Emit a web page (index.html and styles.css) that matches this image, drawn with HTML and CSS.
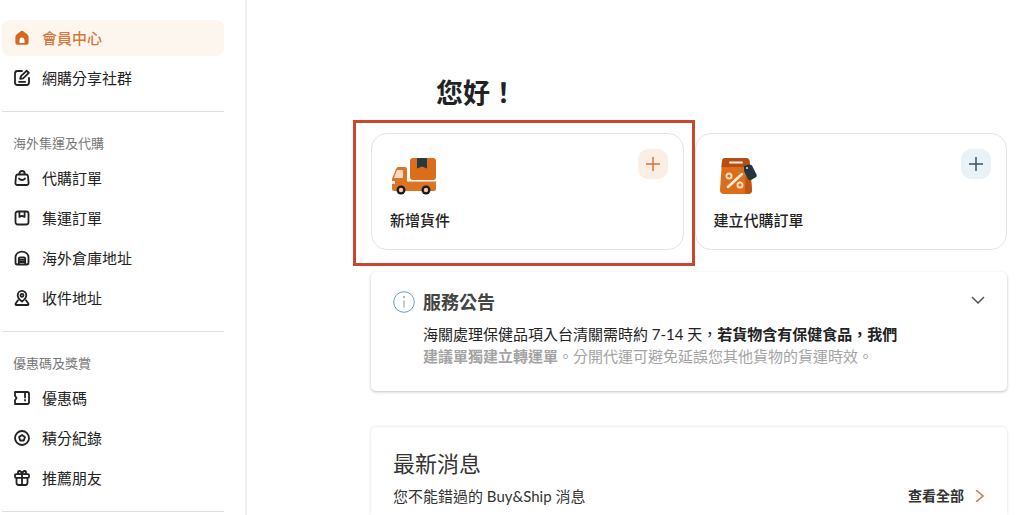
FILE: index.html
```html
<!DOCTYPE html>
<html lang="zh-Hant">
<head>
  <meta charset="UTF-8" />
  <meta name="viewport" content="width=device-width, initial-scale=1.0" />
  <title>會員中心</title>
  <link rel="stylesheet" href="styles.css">
</head>
<body>
  <nav class="sidebar">
    <ul class="menu">
      <li>
        <a class="menu-item active" href="#">
          <svg class="icon" viewBox="0 0 18 18"><path d="M7.4 2.4a2.4 2.4 0 0 1 3.2 0l3.8 3.2c.8.7 1.2 1.4 1.2 2.4v5.8a2 2 0 0 1-2 2H4.400a2 2 0 0 1-2-2V8c0-1 .4-1.700 1.200-2.400z" fill="#d4691e"/><path d="M6.500 14v-3a2.500 2.500 0 0 1 5 0v3z" fill="#fff"/></svg>
          會員中心
        </a>
      </li>
      <li>
        <a class="menu-item" href="#">
          <svg class="icon line" viewBox="0 0 18 18"><path d="M9 2H4.500A2.500 2.500 0 0 0 2 4.500v9A2.500 2.500 0 0 0 4.500 16h9a2.500 2.500 0 0 0 2.500-2.500V9M7.200 9.800l.8-2.600 5.500-5.400 2.300 2-5.600 5.500zM6 12.800h6.200"/></svg>
          網購分享社群
        </a>
      </li>
    </ul>

    <hr class="divider">
    <h2 class="menu-title">海外集運及代購</h2>
    <ul class="menu">
      <li>
        <a class="menu-item" href="#">
          <svg class="icon line" viewBox="0 0 18 18"><path d="M5 5.500h8a2 2 0 0 1 2 1.700l.6 6.600a2 2 0 0 1-2 2.200H4.400a2 2 0 0 1-2-2.200L3 7.200a2 2 0 0 1 2-1.700zM6.200 5.200C6.200 3.400 7.300 2 9 2s2.800 1.400 2.800 3.200M6 9.500c1.500 2 4.500 2 6 0"/></svg>
          代購訂單
        </a>
      </li>
      <li>
        <a class="menu-item" href="#">
          <svg class="icon line" viewBox="0 0 18 18"><rect x="2.500" y="2.500" width="13" height="13" rx="2.200"/><path d="M6.400 2.700v5.200L9 6.800l2.600 1.100V2.700"/></svg>
          集運訂單
        </a>
      </li>
      <li>
        <a class="menu-item" href="#">
          <svg class="icon line" viewBox="0 0 18 18"><path d="M2.500 13.500V8C2.500 4.800 5.700 2.600 9 2.600S15.500 4.800 15.500 8v5.500c0 1.300-.7 2-1.800 2H4.300c-1.100 0-1.800-.7-1.800-2zM5.800 15V9.800c0-.8.4-1.300 1.200-1.300h4c.8 0 1.200.5 1.200 1.300V15M6 10.800h6M6 13h6"/></svg>
          海外倉庫地址
        </a>
      </li>
      <li>
        <a class="menu-item" href="#">
          <svg class="icon line" viewBox="0 0 18 18"><path d="M9 12.600C6 10.200 4.700 8.500 4.700 6.200a4.300 4.300 0 0 1 8.600 0c0 2.300-1.300 4-4.300 6.400z"/><circle cx="9" cy="6.300" r="1.500"/><path d="M5 11.200l-2.300 3.300c-.5.800-.1 1.500.7 1.500h11.200c.8 0 1.200-.7.7-1.500L13 11.200"/></svg>
          收件地址
        </a>
      </li>
    </ul>

    <hr class="divider">
    <h2 class="menu-title">優惠碼及獎賞</h2>
    <ul class="menu">
      <li>
        <a class="menu-item" href="#">
          <svg class="icon line" viewBox="0 0 18 18"><path d="M2 3h12.200c1.100 0 1.800.7 1.800 1.800v8.400c0 1.100-.7 1.800-1.800 1.800H2v-3.700l1.500-2.300L2 6.700zM12 4v4.500M12 11v.5"/></svg>
          優惠碼
        </a>
      </li>
      <li>
        <a class="menu-item" href="#">
          <svg class="icon line" viewBox="0 0 18 18"><circle cx="9" cy="9" r="7"/><path d="M9 6l2.900 2.100-1.100 3.400H7.200L6.100 8.100z"/></svg>
          積分紀錄
        </a>
      </li>
      <li>
        <a class="menu-item" href="#">
          <svg class="icon line" viewBox="0 0 18 18"><path d="M3 5.200h12a1 1 0 0 1 1 1v1.600a1 1 0 0 1-1 1H3a1 1 0 0 1-1-1V6.200a1 1 0 0 1 1-1zM3.500 8.800v5A2.200 2.200 0 0 0 5.700 16h6.600a2.200 2.200 0 0 0 2.200-2.200v-5M9 5.200V16M9 5C8.500 3 7.500 1.800 6 2 4.500 2.300 4.600 4.200 6 5M9 5c.5-2 1.500-3.200 3-3 1.500.3 1.400 2.200 0 3"/></svg>
          推薦朋友
        </a>
      </li>
    </ul>
    <hr class="divider">
  </nav>

  <main class="content">
    <h1 class="greeting">您好！</h1>

    <div class="actions">
      <div class="highlight">
        <section class="action-card">
          <div class="action-top">
            <svg class="action-icon" viewBox="0 0 48 38">
              <rect x="20" y="1" width="26" height="22" rx="3" fill="#dc6d1b"/>
              <path d="M27 1h10v10.500L32 9.500l-5 2z" fill="#263b40"/>
              <path d="M8 10h7q2 0 2 2v12.500h29V32a2 2 0 0 1-2 2H4a2 2 0 0 1-2-2V22l4-10q1-2 2-2z" fill="#dc7425"/>
              <path d="M7 13h6v8H4l3-8z" fill="#fad9c5"/>
              <path d="M2 24h3v3H2z" fill="#fbe7dc"/>
              <circle cx="11" cy="33" r="4.500" fill="#171b21"/>
              <circle cx="11" cy="33" r="2.200" fill="#f3c9af"/>
              <circle cx="36" cy="33" r="4.500" fill="#171b21"/>
              <circle cx="36" cy="33" r="2.200" fill="#f3c9af"/>
            </svg>
            <button class="add-btn orange" type="button" aria-label="新增貨件">
              <svg viewBox="0 0 14 14"><path d="M7 0v14M0 7h14"/></svg>
            </button>
          </div>
          <h3 class="action-name">新增貨件</h3>
        </section>
      </div>

      <section class="action-card">
        <div class="action-top">
          <svg class="action-icon" viewBox="0 0 48 38">
            <path d="M11 1h21q3 0 3.500 3L38 33q0 4-4 4H10q-4 0-4-4L8 4q.5-3 3-3z" fill="#dc6d1b"/>
            <path d="M32 11l4-1 2 23q0 4-4 4h-3z" fill="#be5415"/>
            <path d="M11 1h21q3 0 3.500 3l.5 6H7.500L8 4q.5-3 3-3z" fill="#b54f16"/>
            <path d="M16 5.500h12" stroke="#fff0e4" stroke-width="2" stroke-linecap="round"/>
            <path d="M28 17L14 30" stroke="#ffecd9" stroke-width="2.500" stroke-linecap="round"/>
            <circle cx="15" cy="19" r="2.500" stroke="#ffdfbf" stroke-width="2"/>
            <circle cx="26" cy="28" r="2.500" stroke="#ffdfbf" stroke-width="2"/>
            <path d="M30 9l5-1.500q2 0 3 1l4.500 9q1 2-1 3L37 23q-2 1-3-1l-4-8z" fill="#21363f"/>
            <circle cx="33" cy="11" r="1" fill="#dce6e8"/>
          </svg>
          <button class="add-btn blue" type="button" aria-label="建立代購訂單">
            <svg viewBox="0 0 14 14"><path d="M7 0v14M0 7h14"/></svg>
          </button>
        </div>
        <h3 class="action-name">建立代購訂單</h3>
      </section>
    </div>

    <section class="panel notice">
      <svg class="info-icon" viewBox="0 0 22 22"><circle cx="11" cy="11" r="10.300"/><path d="M11 9.500v7"/><circle class="dot" cx="11" cy="6" r=".9"/></svg>
      <div class="notice-body">
        <h2>服務公告</h2>
        <p>海關處理保健品項入台清關需時約 7-14 天，<strong>若貨物含有保健食品，我們</strong></p>
        <p class="faded"><strong>建議單獨建立轉運單</strong>。分開代運可避免延誤您其他貨物的貨運時效。</p>
      </div>
      <button class="toggle-btn" type="button" aria-label="展開">
        <svg viewBox="0 0 14 8"><path d="M1 1l6 6 6-6"/></svg>
      </button>
    </section>

    <section class="panel news">
      <h2>最新消息</h2>
      <div class="news-row">
        <p>您不能錯過的 Buy&amp;Ship 消息</p>
        <a class="more" href="#">查看全部
          <svg viewBox="0 0 10 12"><path d="M1 0l7 6-7 6"/></svg>
        </a>
      </div>
    </section>
  </main>
</body>
</html>
```
FILE: styles.css
```css
* {
  box-sizing: border-box;
}

body {
  display: flex;
  height: 100vh;
  margin: 0;
  overflow: hidden;
  background-color: #fff;
  color: #222;
  font-family: Lato, "Noto Sans CJK TC", sans-serif;
  font-size: 15px;
}

h1, h2, h3, p, ul {
  margin: 0;
  padding: 0;
}

a {
  color: inherit;
  text-decoration: none;
}

button {
  padding: 0;
  border: none;
  background: none;
  cursor: pointer;
}

svg {
  display: block;
  flex-shrink: 0;
  fill: none;
}

/* Sidebar */
.sidebar {
  flex: 0 0 247px;
  padding: 20px 21px 0 2px;
  border-right: 2px solid #f0f0f0;
}

.menu {
  display: flex;
  flex-direction: column;
  gap: 4px;
  list-style: none;
}

.menu-item {
  display: flex;
  align-items: center;
  gap: 11px;
  height: 36px;
  padding-left: 11px;
  border-radius: 8px;
  line-height: 20px;
}

.menu-item.active {
  background-color: #fcf6ee;
  color: #d9763a;
  font-weight: 500;
}

.icon {
  width: 18px;
  height: 18px;
}

.line {
  stroke: #222;
  stroke-width: 1.8;
  stroke-linecap: round;
  stroke-linejoin: round;
}

.divider {
  height: 1px;
  margin: 15px 0 0;
  border: none;
  background-color: #dedede;
}

.menu-title {
  margin: 21px 0 7px;
  padding-left: 11px;
  color: #777;
  font-size: 13px;
  font-weight: 400;
  line-height: 20px;
}

/* Main content */
.content {
  display: flex;
  flex: 1;
  flex-direction: column;
  min-width: 0;
  padding: 73px 17px 0 124px;
}

.greeting {
  margin-bottom: 20px;
  padding-left: 65px;
  font-size: 27px;
  font-weight: 700;
  line-height: 40px;
}

.actions {
  display: grid;
  grid-template-columns: 1fr 1fr;
  gap: 11px;
  margin-bottom: 22px;
}

.highlight {
  position: relative;
}

.highlight::after {
  content: "";
  position: absolute;
  inset: -13px -11px -16px -18px;
  border: 3px solid #c9472f;
  pointer-events: none;
}

.action-card {
  padding: 15px 15px 18px 18px;
  border: 1px solid #e4e4e4;
  border-radius: 16px;
}

.action-top {
  display: flex;
  justify-content: space-between;
  height: 61px;
}

.action-icon {
  width: 48px;
  height: 38px;
  margin-top: 8px;
}

.action-name {
  font-size: 15px;
  font-weight: 500;
  line-height: 21px;
}

.add-btn {
  display: flex;
  align-items: center;
  justify-content: center;
  width: 30px;
  height: 30px;
  border-radius: 10px;
}

.add-btn svg {
  width: 14px;
  height: 14px;
  stroke-width: 1.5;
}

.orange {
  background-color: #fbeee4;
  stroke: #d4763a;
}

.blue {
  background-color: #e9f3f7;
  stroke: #365468;
}

.panel {
  border-radius: 5px;
  box-shadow: 0 1px 3px rgba(0, 0, 0, 0.25);
}

.notice {
  display: flex;
  align-items: flex-start;
  gap: 8px;
  margin-bottom: 36px;
  padding: 17px 22px 24px;
}

.info-icon {
  width: 22px;
  height: 22px;
  margin-top: 2px;
  stroke: #6f9dbd;
}

.info-icon .dot {
  fill: #6f9dbd;
  stroke: none;
}

.notice-body {
  flex: 1;
}

.notice h2 {
  margin-bottom: 8px;
  color: #444;
  font-size: 18px;
  font-weight: 700;
  line-height: 26px;
}

.notice p {
  line-height: 22px;
  white-space: nowrap;
}

.notice .faded {
  color: #a3a3a3;
}

.toggle-btn svg {
  width: 14px;
  height: 8px;
  margin-top: 7px;
  stroke: #555;
  stroke-width: 1.5;
}

.news {
  flex: 1;
  padding: 21px 22px 0;
  border-radius: 5px 5px 0 0;
  box-shadow: 0 0 3px rgba(0, 0, 0, 0.15);
  color: #333;
}

.news h2 {
  margin-bottom: 5px;
  font-size: 22px;
  font-weight: 400;
  line-height: 32px;
}

.news-row {
  display: flex;
  align-items: center;
  justify-content: space-between;
  line-height: 22px;
}

.more {
  display: flex;
  align-items: center;
  gap: 11px;
  font-size: 14px;
  font-weight: 700;
}

.more svg {
  width: 10px;
  height: 12px;
  stroke: #d4763a;
  stroke-width: 1.5;
}
```
